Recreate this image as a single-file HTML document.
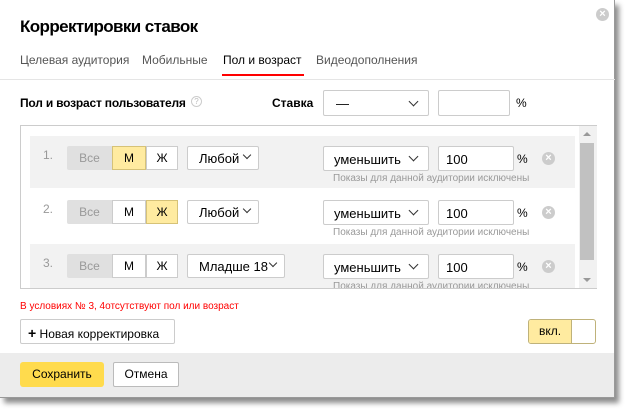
<!DOCTYPE html>
<html><head><meta charset="utf-8"><style>
*{box-sizing:border-box;margin:0;padding:0}
body{width:631px;height:413px;background:#fff;position:relative;overflow:hidden;font-family:"Liberation Sans","DejaVu Sans",sans-serif;color:#000}
.dlg{position:absolute;left:0;top:0;width:615px;height:398px;background:#fff;border-right:1px solid #999;border-bottom:1px solid #999;box-shadow:4px 5px 5px rgba(0,0,0,.45)}
.a{position:absolute}
.t{font-size:13px;white-space:nowrap}
.s{font-size:12px;white-space:nowrap}
.box{position:absolute;border:1px solid #ccc;background:#fff;border-radius:2px}
.chev{position:absolute;width:7px;height:7px;border-right:1.3px solid #333;border-bottom:1.3px solid #333;transform:rotate(45deg)}
.x{position:absolute;width:13px;height:13px;border-radius:50%;background:#ccc;color:#fff;font-size:11px;line-height:13px;text-align:center;font-weight:bold}
.row{position:absolute;left:30px;width:545px;height:52px}
.sub{position:absolute;left:303px;top:37px;font-size:10px;color:#999;white-space:nowrap}
</style></head><body>
<div class="dlg">
<div class="x" style="left:596px;top:8px">×</div>
<div class="a" style="left:20px;top:17px;font-size:17px;font-weight:bold;letter-spacing:-.6px">Корректировки ставок</div>
<div class="a s" style="left:20px;top:53px;color:#555">Целевая аудитория</div>
<div class="a s" style="left:142px;top:53px;color:#555">Мобильные</div>
<div class="a s" style="left:223px;top:53px">Пол и возраст</div>
<div class="a s" style="left:316px;top:53px;color:#555">Видеодополнения</div>
<div class="a" style="left:222px;top:74px;width:82px;height:2px;background:#f00"></div>
<div class="a" style="left:0;top:79px;width:615px;height:1px;background:#e5e5e5"></div>
<div class="a s" style="left:20px;top:96px;font-weight:bold;letter-spacing:-.2px">Пол и возраст пользователя</div>
<div class="a" style="left:191px;top:96px;width:11px;height:11px;border:1px solid #ccc;border-radius:50%;font-size:8px;color:#bbb;text-align:center;line-height:9px">?</div>
<div class="a s" style="left:272px;top:96px;font-weight:bold">Ставка</div>
<div class="box" style="left:323px;top:90px;width:106px;height:26px"><span class="a t" style="left:12px;top:5px">—</span><div class="chev" style="left:86px;top:7px"></div></div>
<div class="box" style="left:438px;top:90px;width:72px;height:26px"></div>
<div class="a s" style="left:516px;top:96px">%</div>
<div class="a" style="left:20px;top:125px;width:577px;height:164px;border:1px solid #ccc;border-right:none;overflow:hidden">
 <div class="a" style="left:558px;top:0;width:18px;height:164px;background:#f1f1f1"></div>
 <div class="a" style="left:559px;top:17px;width:14px;height:117px;background:#c1c1c1"></div>
 <div class="a" style="left:562px;top:6px;border:4px solid transparent;border-bottom:4px solid #999;border-top:none"></div>
 <div class="a" style="left:562px;top:152px;border:4px solid transparent;border-top:4px solid #999;border-bottom:none"></div>
</div>
<div class="a" style="left:21px;top:126px;width:557px;height:162px;overflow:hidden">
<div class="row" style="left:9px;top:10px;background:#f2f2f2">
 <div class="a s" style="left:13px;top:12px;color:#999">1.</div>
 <div class="a s" style="left:37px;top:10px;width:45px;height:24px;background:#e0e0e0;border-radius:2px 0 0 2px;color:#999;text-align:center;line-height:24px">Все</div>
 <div class="a s" style="left:82px;top:10px;width:34px;height:24px;background:#ffeba0;border:1px solid #d6c277;text-align:center;line-height:22px">М</div>
 <div class="a s" style="left:116px;top:10px;width:32px;height:24px;background:#fff;border:1px solid #ccc;text-align:center;line-height:22px">Ж</div>
 <div class="box" style="left:157px;top:10px;width:72px;height:24px"><span class="a t" style="left:11px;top:4px">Любой</span><div class="chev" style="left:56px;top:5px;width:6px;height:6px"></div></div>
 <div class="box" style="left:293px;top:10px;width:106px;height:25px"><span class="a t" style="left:10px;top:5px">уменьшить</span><div class="chev" style="left:86px;top:6px"></div></div>
 <div class="box" style="left:408px;top:10px;width:76px;height:25px"><span class="a t" style="left:7px;top:5px">100</span></div>
 <div class="a s" style="left:487px;top:16px">%</div>
 <div class="x" style="left:512px;top:16px">×</div>
 <div class="sub">Показы для данной аудитории исключены</div>
</div>
<div class="row" style="left:9px;top:64px;background:#fff">
 <div class="a s" style="left:13px;top:12px;color:#999">2.</div>
 <div class="a s" style="left:37px;top:10px;width:45px;height:24px;background:#e0e0e0;border-radius:2px 0 0 2px;color:#999;text-align:center;line-height:24px">Все</div>
 <div class="a s" style="left:82px;top:10px;width:34px;height:24px;background:#fff;border:1px solid #ccc;text-align:center;line-height:22px">М</div>
 <div class="a s" style="left:116px;top:10px;width:32px;height:24px;background:#ffeba0;border:1px solid #d6c277;text-align:center;line-height:22px">Ж</div>
 <div class="box" style="left:157px;top:10px;width:72px;height:24px"><span class="a t" style="left:11px;top:4px">Любой</span><div class="chev" style="left:56px;top:5px;width:6px;height:6px"></div></div>
 <div class="box" style="left:293px;top:10px;width:106px;height:25px"><span class="a t" style="left:10px;top:5px">уменьшить</span><div class="chev" style="left:86px;top:6px"></div></div>
 <div class="box" style="left:408px;top:10px;width:76px;height:25px"><span class="a t" style="left:7px;top:5px">100</span></div>
 <div class="a s" style="left:487px;top:16px">%</div>
 <div class="x" style="left:512px;top:16px">×</div>
 <div class="sub">Показы для данной аудитории исключены</div>
</div>
<div class="row" style="left:9px;top:118px;background:#f2f2f2">
 <div class="a s" style="left:13px;top:12px;color:#999">3.</div>
 <div class="a s" style="left:37px;top:10px;width:45px;height:24px;background:#e0e0e0;border-radius:2px 0 0 2px;color:#999;text-align:center;line-height:24px">Все</div>
 <div class="a s" style="left:82px;top:10px;width:34px;height:24px;background:#fff;border:1px solid #ccc;text-align:center;line-height:22px">М</div>
 <div class="a s" style="left:116px;top:10px;width:32px;height:24px;background:#fff;border:1px solid #ccc;text-align:center;line-height:22px">Ж</div>
 <div class="box" style="left:157px;top:10px;width:98px;height:24px"><span class="a t" style="left:11px;top:4px">Младше 18</span><div class="chev" style="left:82px;top:5px;width:6px;height:6px"></div></div>
 <div class="box" style="left:293px;top:10px;width:106px;height:25px"><span class="a t" style="left:10px;top:5px">уменьшить</span><div class="chev" style="left:86px;top:6px"></div></div>
 <div class="box" style="left:408px;top:10px;width:76px;height:25px"><span class="a t" style="left:7px;top:5px">100</span></div>
 <div class="a s" style="left:487px;top:16px">%</div>
 <div class="x" style="left:512px;top:16px">×</div>
 <div class="sub">Показы для данной аудитории исключены</div>
</div>
</div>
<div class="a" style="left:20px;top:301px;font-size:10px;color:#f00;white-space:nowrap">В условиях № 3, 4отсутствуют пол или возраст</div>
<div class="box" style="left:20px;top:319px;width:155px;height:25px"><span class="a s" style="left:7px;top:5px"><b style="font-size:14px">+</b> Новая корректировка</span></div>
<div class="a" style="left:528px;top:319px;width:68px;height:25px;border:1px solid #bfb27a;border-radius:3px;overflow:hidden;background:#fff">
 <div class="a s" style="left:0;top:0;width:43px;height:23px;background:#ffeba0;border-right:1px solid #bfb27a;text-align:center;line-height:23px">вкл.</div>
</div>
<div class="a" style="left:0;top:353px;width:614px;height:44px;background:#ececec"></div>
<div class="a s" style="left:20px;top:362px;width:84px;height:25px;background:#ffdb4d;border-radius:3px;text-align:center;line-height:25px">Сохранить</div>
<div class="box" style="left:113px;top:362px;width:66px;height:25px;border-color:#bbb;text-align:center;line-height:23px;font-size:12px">Отмена</div>
</div>
</body></html>
